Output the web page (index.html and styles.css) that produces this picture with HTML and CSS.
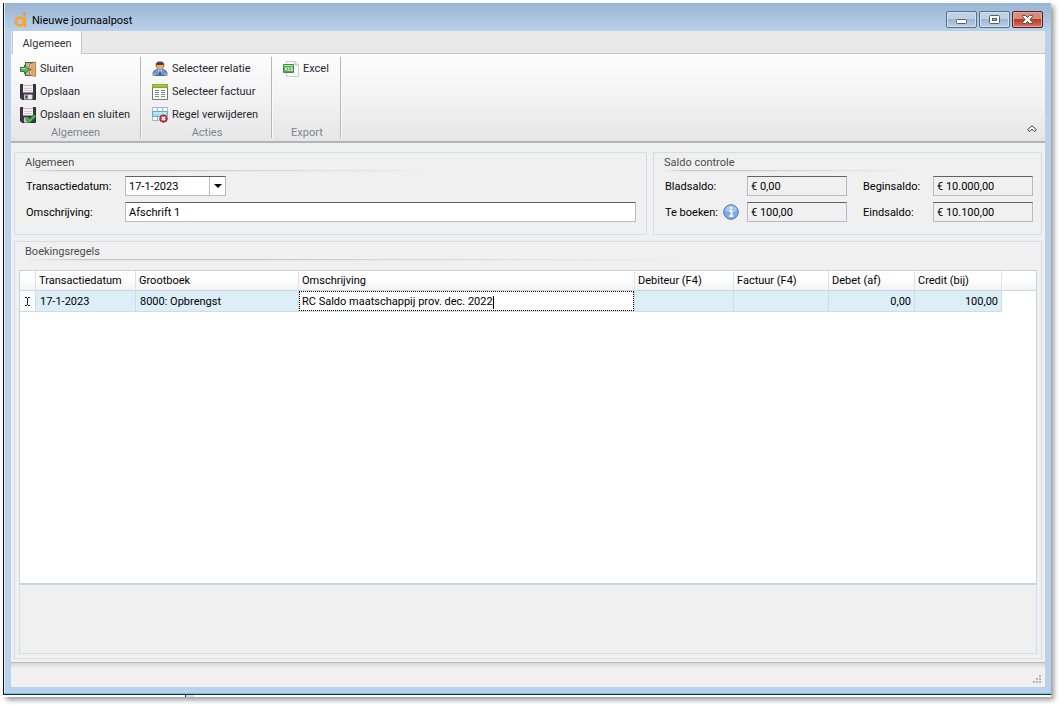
FILE: index.html
```html
<!DOCTYPE html>
<html lang="nl">
<head>
<meta charset="utf-8">
<title>Nieuwe journaalpost</title>
<link rel="stylesheet" href="styles.css">
</head>
<body>
<div class="desktop">
<div class="window">
  <header class="titlebar">
    <svg class="logo" width="15" height="17" viewBox="0 0 15 17" aria-hidden="true"><circle cx="5.800" cy="10.500" r="4" fill="none" stroke="#ffa21f" stroke-width="2.600"/><path d="M10.800 6v7.500q0 1.500 1.400 1.700" fill="none" stroke="#ffa21f" stroke-width="2.500"/><path d="M10.500 1v4M8.500 3h4" stroke="#ff8b2b" stroke-width="1.200"/></svg>
    <h1 class="title">Nieuwe journaalpost</h1>
    <div class="window-buttons">
      <button class="winbtn" aria-label="Minimaliseren"><svg width="13" height="13" viewBox="0 0 13 13"><rect x="1.500" y="6.500" width="10" height="4" rx="1" fill="#fff" stroke="#565d68"/></svg></button>
      <button class="winbtn" aria-label="Maximaliseren"><svg width="13" height="13" viewBox="0 0 13 13"><rect x="1.500" y="2.500" width="10" height="8" rx="1" fill="#fff" stroke="#565d68"/><rect x="4.500" y="5.500" width="4" height="2" fill="#9cb6d3" stroke="#565d68"/></svg></button>
      <button class="winbtn winbtn-close" aria-label="Sluiten"><svg width="13" height="13" viewBox="0 0 13 13"><path d="M1.500 2.500h3l2 2 2-2h3v1l-2.500 3 2.500 3v1h-3l-2-2-2 2h-3v-1l2.500-3-2.500-3z" fill="#fff" stroke="#5b4a50"/></svg></button>
    </div>
  </header>

  <div class="client">
    <nav class="tabs"><button class="tab">Algemeen</button></nav>
    <div class="ribbon">
      <section class="ribbon-group group-general">
        <button class="command"><svg width="16" height="16" viewBox="0 0 16 16"><path d="M5 1h10.500v14H5z" fill="#6d5239"/><path d="M6 2h4v12H6z" fill="#b9b6b2"/><path d="M9.500 3L15.500 1v14.500l-6-1.500z" fill="#e9b278" stroke="#a87340" stroke-width=".7"/><path d="M11 4.500l3-.8v9.500l-3-.6z" fill="#dfa263"/><circle cx="10.800" cy="8.500" r=".8" fill="#7d4f26"/><path d="M.5 6.500H4.500V4l5 4.500-5 4.500v-2.500H.5z" fill="#62b063" stroke="#2f7a3e"/><path d="M1.500 7.500H5.500" stroke="#b0dfab"/></svg>Sluiten</button>
        <button class="command"><svg width="16" height="16" viewBox="0 0 16 16"><path d="M.5 .5h15v15H2L.5 14z" fill="#3a3944" stroke="#2b2a35"/><path d="M3 0h10v8.500H3z" fill="#f4eff4"/><path d="M3 1.500h10" stroke="#e2a6bd"/><path d="M4 4.500h8M4 6.500h8" stroke="#cfcad6"/><path d="M4 10.500h8.500v5H4z" fill="#c9c8d2"/><path d="M5.500 11.500h2v3h-2z" fill="#3a3944"/><path d="M8.500 11h3v4h-3z" fill="#eeeef2"/></svg>Opslaan</button>
        <button class="command"><svg width="16" height="16" viewBox="0 0 16 16"><path d="M.5 .5h15v15H2L.5 14z" fill="#3a3944" stroke="#2b2a35"/><path d="M3 0h10v8.500H3z" fill="#f4eff4"/><path d="M3 1.500h10" stroke="#e2a6bd"/><path d="M4 4.500h8M4 6.500h8" stroke="#cfcad6"/><path d="M4 10.500h5v5H4z" fill="#c9c8d2"/><path d="M6.500 11.200l3 2.800L15 8.500" fill="none" stroke="#1f7420" stroke-width="3.800"/><path d="M6.500 11.200l3 2.800L15 8.500" fill="none" stroke="#4fbc45" stroke-width="2.200"/></svg>Opslaan en sluiten</button>
        <h2 class="caption">Algemeen</h2>
      </section>
      <section class="ribbon-group group-actions">
        <button class="command"><svg width="16" height="16" viewBox="0 0 16 16"><path d="M1 14.500V12q.5-3 4.500-3.500h5q4 .5 4.500 3.500v2.500z" fill="#5f9bdc" stroke="#376fb3"/><path d="M5.500 8.500l2.500 5 2.500-5z" fill="#e9f3ff"/><path d="M7.500 9.500h1l.7 4.500H6.800z" fill="#275997"/><ellipse cx="8" cy="5.300" rx="3.600" ry="3.900" fill="#e9ab78" stroke="#9a5b34" stroke-width=".6"/><path d="M3.800 5.500Q3 .4 8 .4T12.200 5.500L11 3.700Q7.500 4.600 5 3.700z" fill="#6b3d20"/><path d="M.8 13.500h2.600M12.600 13.500h2.600" stroke="#e6a66e" stroke-width="2"/></svg>Selecteer relatie</button>
        <button class="command"><svg width="16" height="16" viewBox="0 0 16 16"><path d="M.5 .5h15v15H.5z" fill="#fff" stroke="#737a70"/><path d="M0 0h16v4H0z" fill="#7fae22"/><path d="M1 1h14v1.500H1z" fill="#a8d14f"/><path d="M3 6.500h4M3 8.500h4M3 10.500h4M3 12.500h4M9 6.500h4M9 8.500h4M9 10.500h4M9 12.500h4" stroke="#848b88"/></svg>Selecteer factuur</button>
        <button class="command"><svg width="16" height="16" viewBox="0 0 16 16"><path d="M.5 .5h15v4H.5zM.5 9.500h15v4H.5z" fill="#fff" stroke="#a8b3c2"/><path d="M5.500 0v14M10.500 0v14" stroke="#a8b3c2"/><path d="M.5 4.500h15v5H.5z" fill="#9fdcf8" stroke="#57aedd"/><path d="M2 6h12" stroke="#d3f1fd"/><circle cx="11.500" cy="11.500" r="4.500" fill="#fff"/><circle cx="11.500" cy="11.500" r="3.800" fill="#cb383d" stroke="#96262b"/><path d="M9.900 9.900l3.200 3.200m0-3.200l-3.200 3.200" stroke="#fff" stroke-width="1.500"/></svg>Regel verwijderen</button>
        <h2 class="caption">Acties</h2>
      </section>
      <section class="ribbon-group group-export">
        <button class="command"><svg width="16" height="16" viewBox="0 0 16 16"><path d="M3.500 .5H12l3.500 3.500v11.500h-12z" fill="#fcfcfc" stroke="#cbcdcf"/><path d="M12 .5V4h3.500" fill="#e9eaeb" stroke="#bdc0c2"/><path d="M.5 3.500h10v8H.5z" fill="#5aa65a" stroke="#3a8b41"/><path d="M1 4.500h9" stroke="#c0e2bc"/><path d="M1.800 6.200l2.600 3.300m0-3.300l-2.600 3.300M5.800 6v3.500h1M9.500 6.500H8v1.500h1.500v1.500H7.800" fill="none" stroke="#e9f7e6"/></svg>Excel</button>
        <h2 class="caption">Export</h2>
      </section>
      <button class="collapse" aria-label="Lint samenvouwen"><svg width="10" height="8" viewBox="0 0 10 8"><path d="M.7 4.500L5 .8 9.300 4.500 7.800 6.500 5 4.300 2.200 6.500z" fill="#fff" stroke="#3c3c3c"/></svg></button>
    </div>

    <main class="content">
      <div class="panels">
        <section class="panel panel-general">
          <h2 class="panel-title">Algemeen</h2>
          <div class="fields">
            <label for="date">Transactiedatum:</label>
            <div class="combo"><input id="date" value="17-1-2023"><button class="drop" aria-label="Kalender openen"></button></div>
            <label for="description">Omschrijving:</label>
            <input id="description" class="field" value="Afschrift 1">
          </div>
        </section>
        <section class="panel panel-balance">
          <h2 class="panel-title">Saldo controle</h2>
          <div class="balances">
            <label for="sheet">Bladsaldo:</label><input id="sheet" class="field readonly" readonly value="€ 0,00">
            <label for="start">Beginsaldo:</label><input id="start" class="field readonly" readonly value="€ 10.000,00">
            <div class="label-info"><label for="todo">Te boeken:</label><svg width="16" height="16" viewBox="0 0 16 16" aria-hidden="true"><circle cx="8" cy="8" r="7.300" fill="#82aae2" stroke="#4d73b2"/><path d="M2 7a6 5.500 0 0 1 12 0Q8 9 2 7z" fill="#a9c7f0"/><path d="M6.500 7H8.500v5M6.200 12.200h4" fill="none" stroke="#fff" stroke-width="1.800"/><circle cx="8" cy="4" r="1.200" fill="#fff"/></svg></div><input id="todo" class="field readonly" readonly value="€ 100,00">
            <label for="end">Eindsaldo:</label><input id="end" class="field readonly" readonly value="€ 10.100,00">
          </div>
        </section>
      </div>

      <section class="panel panel-lines">
        <h2 class="panel-title">Boekingsregels</h2>
        <div class="grid">
          <table class="lines">
            <colgroup><col class="c-mark"><col class="c-date"><col class="c-ledger"><col class="c-desc"><col class="c-debtor"><col class="c-invoice"><col class="c-debit"><col class="c-credit"><col></colgroup>
            <thead><tr><th></th><th>Transactiedatum</th><th>Grootboek</th><th>Omschrijving</th><th>Debiteur (F4)</th><th>Factuur (F4)</th><th>Debet (af)</th><th>Credit (bij)</th><th></th></tr></thead>
            <tbody><tr>
              <td class="mark"><svg width="7" height="9" viewBox="0 0 7 9"><path d="M1 .5h2M4 .5h2M3.500 1v7M1 8.500h2M4 8.500h2" stroke="#222"/></svg></td>
              <td>17-1-2023</td><td>8000: Opbrengst</td>
              <td class="editing"><div class="editor" contenteditable="true" role="textbox" aria-label="Omschrijving">RC Saldo maatschappij prov. dec. 2022<span class="caret"></span></div></td>
              <td></td><td></td><td class="num">0,00</td><td class="num">100,00</td><td class="blank"></td>
            </tr></tbody>
          </table>
        </div>
        <div class="grid-footer"></div>
      </section>
    </main>

    <footer class="status"><svg width="9" height="9" viewBox="0 0 9 9" aria-hidden="true"><path d="M6 1h2M3 4h2M6 4h2M0 7h2M3 7h2M6 7h2" stroke="#b5b5b5" stroke-width="2"/></svg></footer>
  </div>
</div>
<div class="behind"></div>
</div>
</body>
</html>
```
FILE: styles.css
```css
* { box-sizing: border-box; }
html { height: 100%; }
body {
  margin: 0;
  height: 100%;
  padding: 3px 9px 9px 3px;
  background: #fff;
  color: #000;
  font: 11px/14px Roboto, "Noto Sans", sans-serif;
}
h1, h2 { margin: 0; font: inherit; }
button, input { font: inherit; color: inherit; margin: 0; }
button { padding: 0; border: 0; background: none; }
svg { display: block; flex: none; }

.desktop {
  height: 100%;
  display: flex;
  flex-direction: column;
  box-shadow: 3px 3px 5px #999;
}
.window {
  flex: 1;
  min-height: 0;
  display: flex;
  flex-direction: column;
  padding: 0 6px 7px 7px;
  border-left: 1px solid #111;
  border-bottom: 1px solid #222b33;
  background: linear-gradient(#9ab5d2, #b9d1ea 28px, #b9d1ea);
  box-shadow: inset 0 -1px #62c7e8, inset 1px 0 #e4eef8;
}
.behind {
  height: 2px;
  background: linear-gradient(90deg, #fff 182px, #222 182px, #222 183px, #d5dfeb 183px, #d5dfeb 191px, #fff 191px);
}

.titlebar { height: 28px; display: flex; align-items: center; padding: 5px 2px 0 3px; }
.title { flex: 1; margin-left: 3px; padding-top: 2px; }
.window-buttons { display: flex; gap: 2px; }
.winbtn {
  width: 31px;
  height: 17px;
  display: flex;
  align-items: center;
  justify-content: center;
  border: 1px solid #596f89;
  border-radius: 2px;
  background: linear-gradient(#bfd1e5 50%, #9cb6d3 50%, #b9d0e8);
  box-shadow: inset 0 0 0 1px #d1e0ef;
}
.winbtn-close {
  border-color: #561b23;
  background: linear-gradient(#d98c7e 50%, #b93a23 50%, #cf7760);
  box-shadow: inset 0 0 0 1px #e4a99e;
}

.client { flex: 1; min-height: 0; display: flex; flex-direction: column; background: #f0f0f0; }
.tabs { height: 23px; padding-left: 1px; background: #e9e9e9; border-bottom: 1px solid #c5c5c5; }
.tab {
  height: 23px;
  width: 70px;
  padding-top: 2px;
  border: 1px solid #c5c5c5;
  border-width: 0 1px 0 1px;
  background: #fdfdfd;
  color: #35353d;
}
.ribbon {
  height: 89px;
  flex: none;
  display: flex;
  padding: 3px 8px 3px 1px;
  border-bottom: 2px solid #b4b4b4;
  background: linear-gradient(#fdfdfd, #f3f3f3 50%, #e6e6e6);
  color: #282832;
}
.ribbon-group { display: flex; flex-direction: column; border-right: 1px solid #b8b8b8; box-shadow: 1px 0 #fafafa; }
.group-general { width: 129px; padding-left: 8px; }
.group-actions { width: 131px; padding-left: 11px; }
.group-export { width: 69px; padding-left: 11px; }
.command { height: 23px; flex: none; display: flex; align-items: center; gap: 4px; white-space: nowrap; text-align: left; }
.caption { height: 12px; margin-top: auto; padding-right: 9px; text-align: center; color: #7b8794; }
.collapse { margin-left: auto; align-self: flex-end; padding-bottom: 5px; }

.content { flex: 1; min-height: 0; display: flex; flex-direction: column; gap: 6px; padding: 9px 3px 3px; }
.panels { display: flex; gap: 6px; }
.panel { border: 1px solid #d5dee8; }
.panel-general { flex: 1; }
.panel-balance { width: 389px; }
.panel-lines { flex: 1; min-height: 0; display: flex; flex-direction: column; padding: 0 4px 4px; }
.panel-title {
  height: 18px;
  padding: 3px 0 0 10px;
  color: #4c4c4c;
}
.panel-title::after {
  content: "";
  display: block;
  height: 3px;
  width: 66%;
  background: linear-gradient(#c8c8c8 1px, #e4e4e4 1px, #f0f0f0);
  mask-image: linear-gradient(90deg, transparent, #000 8%, #000 35%, transparent);
}
.panel-lines > .panel-title { padding-left: 6px; }

.fields { display: grid; grid-template-columns: 99px 1fr; row-gap: 6px; align-items: center; padding: 5px 10px 12px 11px; }
.balances { display: grid; grid-template-columns: 82px 100px 1fr 100px; row-gap: 6px; align-items: center; padding: 5px 8px 12px 11px; }
.fields label, .balances label { padding-top: 1px; }
.balances > label:nth-of-type(2), .balances > label:last-of-type { padding-left: 16px; }
.label-info { display: flex; align-items: center; gap: 5px; }
.field, .combo {
  height: 20px;
  min-width: 0;
  width: 100%;
  padding: 0 3px;
  border: 1px solid #b9bbc1;
  border-top-color: #606060;
  border-radius: 0;
  background: #fff;
  outline: 0;
}
.readonly { background: #f0f0f0; }
.combo { width: 101px; display: flex; padding: 0; }
.combo input { flex: 1; min-width: 0; padding: 1px 3px 0; border: 0; background: none; outline: 0; }
.drop { width: 16px; display: flex; align-items: center; justify-content: center; border-left: 1px solid #b9bbc1; }
.drop::before { content: ""; border: 4px solid transparent; border-top-color: #000; border-bottom: 0; }

.grid { flex: 1; min-height: 0; margin-top: 10px; border: 1px solid #ccd2d8; border-bottom: 2px solid #cfd4d9; background: #fff; }
.grid-footer { height: 69px; border: 1px solid #d5dee8; border-top: 0; }
.lines { width: 100%; table-layout: fixed; border-collapse: separate; border-spacing: 0; }
.c-mark { width: 16px; }
.c-date { width: 100px; }
.c-ledger { width: 163px; }
.c-desc { width: 336px; }
.c-debtor { width: 99px; }
.c-invoice { width: 95px; }
.c-debit { width: 86px; }
.c-credit { width: 87px; }
.lines th {
  height: 20px;
  padding: 0 3px;
  text-align: left;
  font-weight: normal;
  background: linear-gradient(#fff, #fff 40%, #f2f3f5);
  border-right: 1px solid #dfe1e4;
  border-bottom: 1px solid #d2d5d9;
}
.lines th:last-child { border-right: 0; }
.lines td { height: 21px; padding: 1px 4px 0; background: #dceef8; border-right: 1px solid #d3dbe1; border-bottom: 1px solid #d3dbe1; }
.lines .mark { padding: 0 0 0 4px; background: #fbfbfb; }
.lines .num { text-align: right; padding-right: 3px; }
.lines .blank { background: #fff; border: 0; }
.lines .editing { padding: 0; background: #fff; }
.editor { height: 20px; padding: 3px 2px 1px; border: 1px dotted #000; outline: 0; white-space: nowrap; line-height: 14px; }
.caret { display: inline-block; width: 1px; height: 13px; background: #000; vertical-align: middle; }

.status {
  height: 25px;
  flex: none;
  display: flex;
  align-items: flex-end;
  justify-content: flex-end;
  padding: 0 3px 3px;
  border-top: 1px solid #bfbfbf;
  background: linear-gradient(#d5d5d5, #f0f0f0 5px);
}
```
